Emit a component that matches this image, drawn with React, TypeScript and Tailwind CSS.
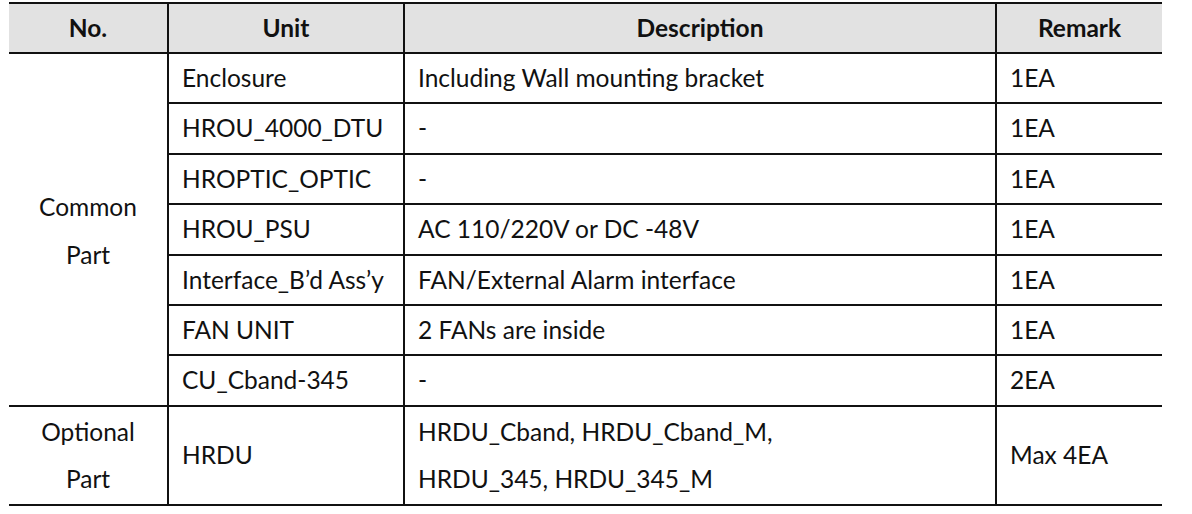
const rows = [
  { unit: "Enclosure", desc: "Including Wall mounting bracket", remark: "1EA" },
  { unit: "HROU_4000_DTU", desc: "-", remark: "1EA" },
  { unit: "HROPTIC_OPTIC", desc: "-", remark: "1EA" },
  { unit: "HROU_PSU", desc: "AC 110/220V or DC -48V", remark: "1EA" },
  { unit: "Interface_B\u2019d Ass\u2019y", desc: "FAN/External Alarm interface", remark: "1EA" },
  { unit: "FAN UNIT", desc: "2 FANs are inside", remark: "1EA" },
  { unit: "CU_Cband-345", desc: "-", remark: "2EA" },
];

const font = { fontFamily: "Lato, 'Open Sans', sans-serif" };

export default function App() {
  return (
    <div className="w-[1192px] h-[514px] bg-white text-[#111] pt-[2px] pl-[9px]" style={font}>
      <table className="border-collapse w-[1153px] table-fixed text-[24.5px]">
        <colgroup>
          <col className="w-[159px]" />
          <col className="w-[236px]" />
          <col className="w-[592px]" />
          <col className="w-[166px]" />
        </colgroup>
        <thead>
          <tr className="h-[50px] bg-[#e2e2e2] font-bold">
            <th className="border-y-2 border-[#111] text-center">No.</th>
            <th className="border-2 border-[#111] text-center">Unit</th>
            <th className="border-2 border-[#111] text-center">Description</th>
            <th className="border-y-2 border-[#111] text-center">Remark</th>
          </tr>
        </thead>
        <tbody>
          {rows.map((r, i) => (
            <tr key={r.unit} className="h-[50.4px]">
              {i === 0 && (
                <td rowSpan={7} className="border-b-2 border-[#111] text-center leading-[48px] pt-[4px]">
                  Common
                  <br />
                  Part
                </td>
              )}
              <td className="border-2 border-[#111] px-[13px] leading-none">{r.unit}</td>
              <td className="border-2 border-[#111] px-[13px] leading-none">{r.desc}</td>
              <td className="border-b-2 border-[#111] px-[13px] leading-none">{r.remark}</td>
            </tr>
          ))}
          <tr className="h-[99px]">
            <td className="border-b-2 border-[#111] text-center leading-[47px]">
              Optional
              <br />
              Part
            </td>
            <td className="border-2 border-[#111] px-[13px]">HRDU</td>
            <td className="border-2 border-[#111] px-[13px] leading-[47px]">
              HRDU_Cband, HRDU_Cband_M,
              <br />
              HRDU_345, HRDU_345_M
            </td>
            <td className="border-b-2 border-[#111] px-[13px]">Max 4EA</td>
          </tr>
        </tbody>
      </table>
    </div>
  );
}
